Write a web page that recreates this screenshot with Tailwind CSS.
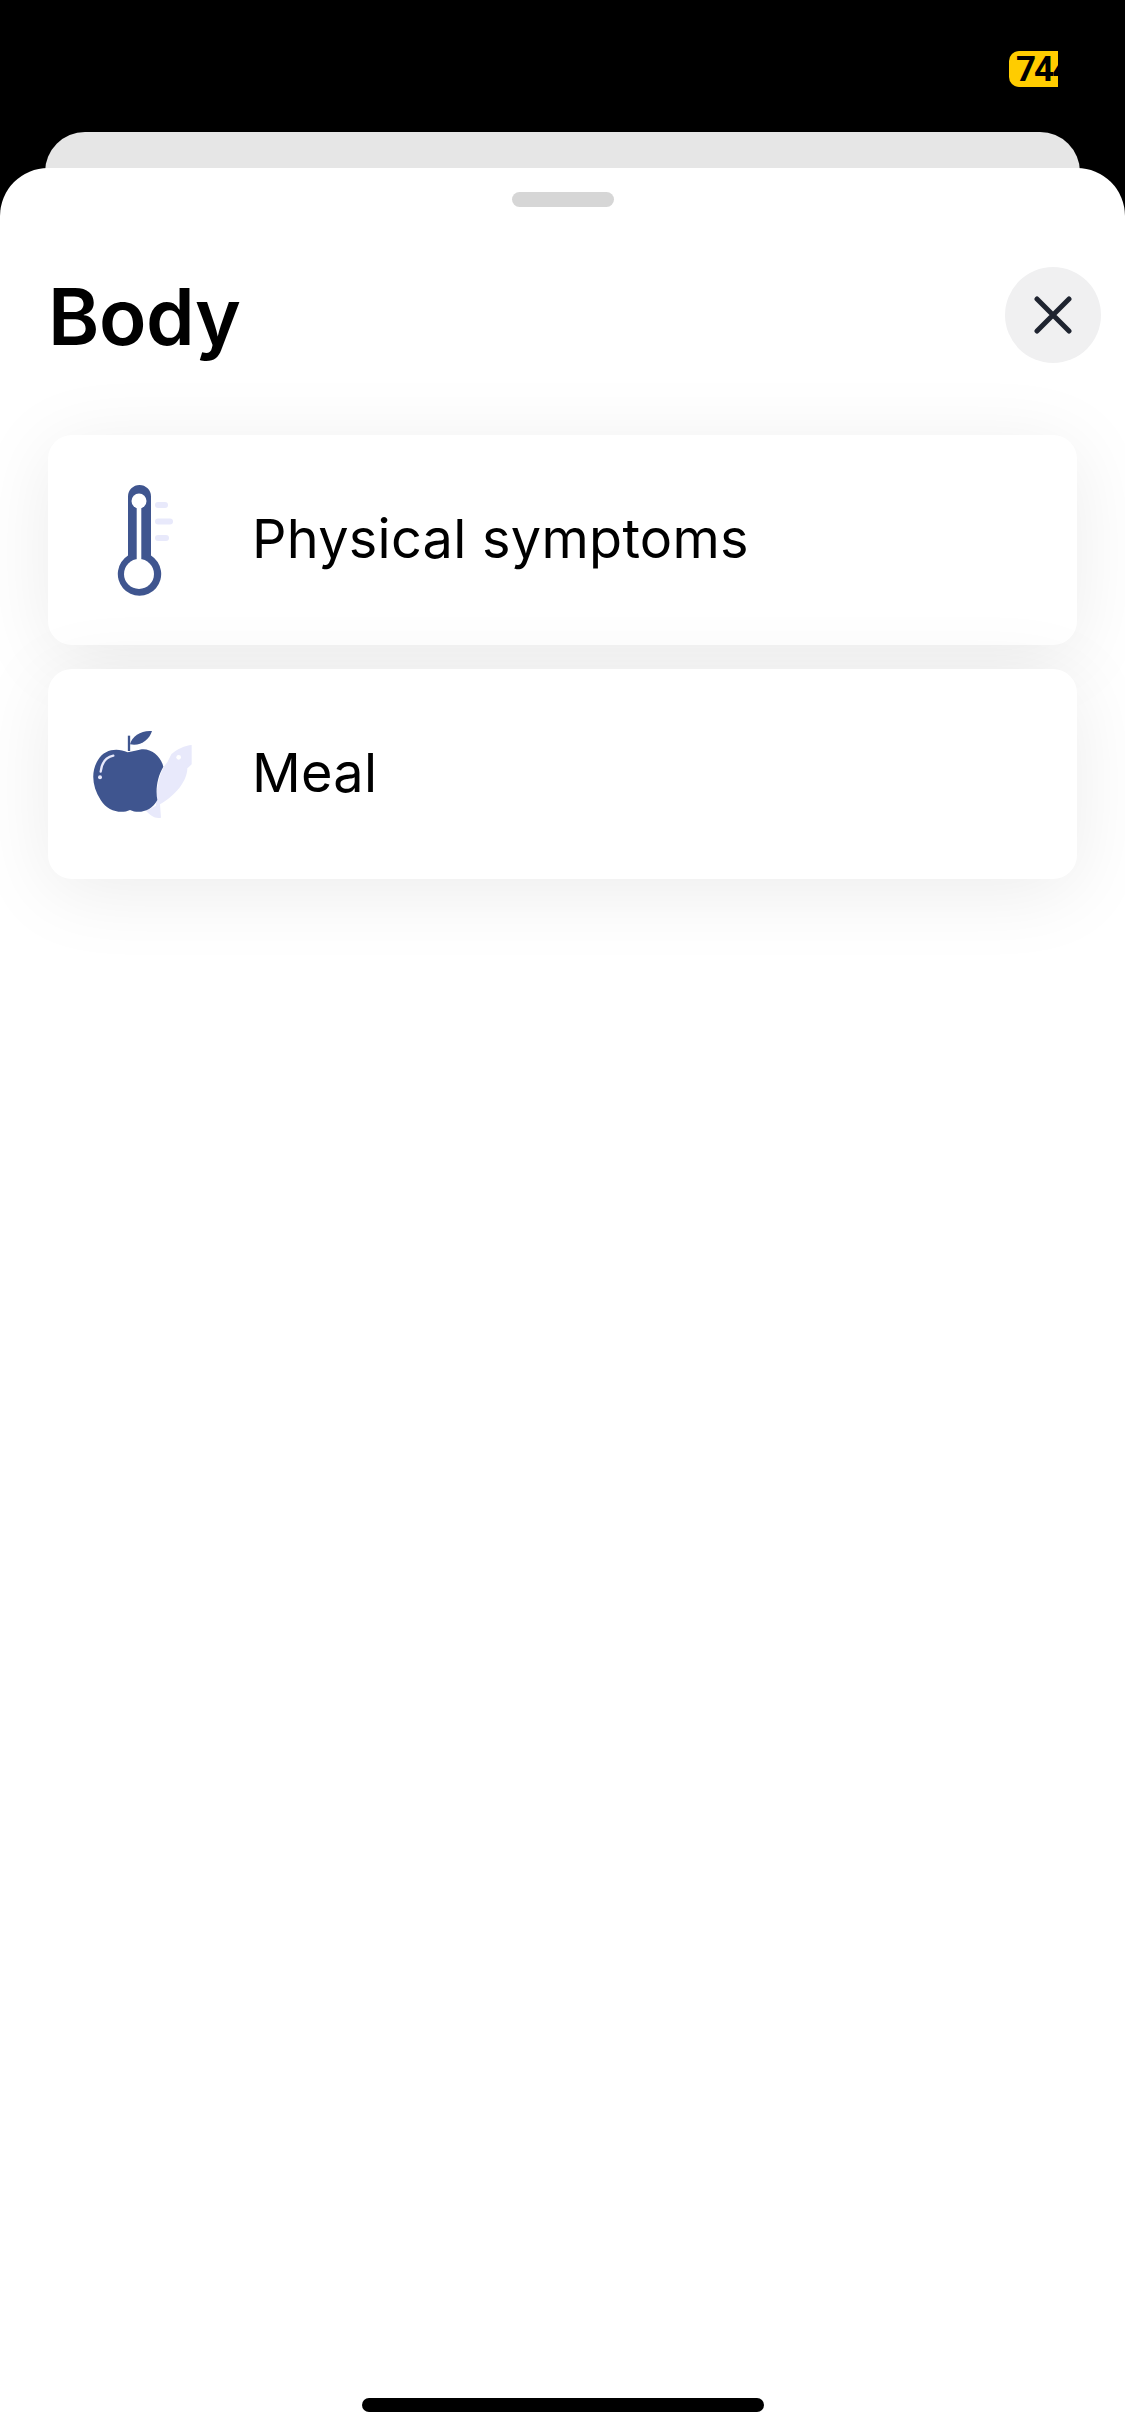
<!DOCTYPE html>
<html lang="en">
<head>
    <meta charset="UTF-8">
    <meta name="viewport" content="width=device-width, initial-scale=1.0">
    <title>Body</title>
    <script src="https://cdn.jsdelivr.net/npm/@tailwindcss/browser@4"></script>
</head>
<body class="bg-black">
    <div class="h-[2436px] w-[1125px] bg-black flex flex-col overflow-hidden font-['Inter',sans-serif]">
        <!-- status bar -->
        <div class="h-[132px] shrink-0 flex justify-end pt-[51px] pr-[67px]">
            <div class="w-[49px] h-[36px] bg-[#ffcc00] rounded-l-[10px] overflow-hidden pl-[7px] text-[35px] leading-[37px] tracking-[-2px] font-bold text-black font-['Roboto',sans-serif] whitespace-nowrap">744</div>
        </div>
        <!-- sheet behind -->
        <div class="h-[84px] -mb-[48px] shrink-0 mx-[45px] bg-[#e6e6e6] rounded-t-[40px]"></div>
        <!-- sheet -->
        <div class="relative flex-1 bg-white rounded-t-[48px] flex flex-col">
            <div class="mt-[24px] mx-auto w-[102px] h-[15px] rounded-full bg-[#d6d6d6]"></div>
            <div class="mt-[60px] flex items-center justify-between pl-[48px] pr-[24px] h-[96px]">
                <h1 class="pt-[4px] text-[78px] leading-[96px] font-semibold tracking-[-0.4px] text-black">Body</h1>
                <button class="w-[96px] h-[96px] rounded-full bg-[#f0f0f1] flex items-center justify-center">
                    <svg width="38" height="38" viewBox="0 0 38 38" fill="none" stroke="#1f2430" stroke-width="5" stroke-linecap="round"><path d="M3 3 35 35M35 3 3 35"/></svg>
                </button>
            </div>
            <div class="mt-[72px] mx-[48px] flex flex-col gap-[24px]">
                <div class="h-[210px] bg-white rounded-[24px] shadow-[0_12px_80px_rgba(0,0,0,0.08)] flex items-center pl-[32px]">
                    <svg class="mb-[10px] shrink-0" width="120" height="130" viewBox="0 0 120 130">
                        <path fill="#3f558f" d="M48 85.600V26.500a11.500 11.500 0 0 1 23 0V85.600a21.700 21.700 0 1 1-23 0Z"/>
                        <circle cx="59" cy="31" r="7.500" fill="#fff"/>
                        <rect x="56.700" y="31" width="4.600" height="60" fill="#fff"/>
                        <circle cx="59" cy="104" r="15" fill="#fff"/>
                        <rect x="75" y="32" width="13" height="6" rx="3" fill="#e8e9fb"/>
                        <rect x="75" y="48.500" width="18" height="6" rx="3" fill="#e8e9fb"/>
                        <rect x="75" y="65" width="14" height="6" rx="3" fill="#e8e9fb"/>
                    </svg>
                    <span class="ml-[52px] mb-[2px] text-[54px] leading-[64px] tracking-[0.28px] text-black">Physical symptoms</span>
                </div>
                <div class="h-[210px] bg-white rounded-[24px] shadow-[0_12px_80px_rgba(0,0,0,0.08)] flex items-center pl-[32px]">
                    <svg class="mb-[8px] shrink-0" width="120" height="110" viewBox="0 0 360 330">
                        <path fill="#e8e9fb" d="M274 118C290 102 315 92 335 90V148C331 152 327 156 322 160 322 195 290 240 240 268L243 308C225 312 210 300 198 287L228 272C228 215 240 165 262 142Z"/>
                        <circle cx="296" cy="127" r="7" fill="#fff"/>
                        <path fill="#3f558f" d="M143 112C112 98 74 102 54 135 32 170 36 215 62 255 82 288 122 298 150 285 178 298 215 288 232 255 226 225 232 185 250 155 243 125 215 100 185 103 172 105 160 110 143 112Z"/>
                        <path fill="none" stroke="#3f558f" stroke-width="7" d="M147 62V108"/>
                        <path fill="#3f558f" d="M150 88C156 62 185 45 216 48 208 75 180 95 150 88Z"/>
                        <path fill="none" stroke="#e8e9fb" stroke-width="7" stroke-linecap="round" d="M100 122C80 126 65 142 62 170"/>
                        <circle cx="60" cy="187" r="6" fill="#e8e9fb"/>
                    </svg>
                    <span class="ml-[52px] mb-[2px] text-[54px] leading-[64px] tracking-[0.28px] text-black">Meal</span>
                </div>
            </div>
            <!-- home indicator -->
            <div class="absolute left-[362px] top-[2230px] w-[402px] h-[14px] rounded-full bg-black"></div>
        </div>
    </div>
</body>
</html>
